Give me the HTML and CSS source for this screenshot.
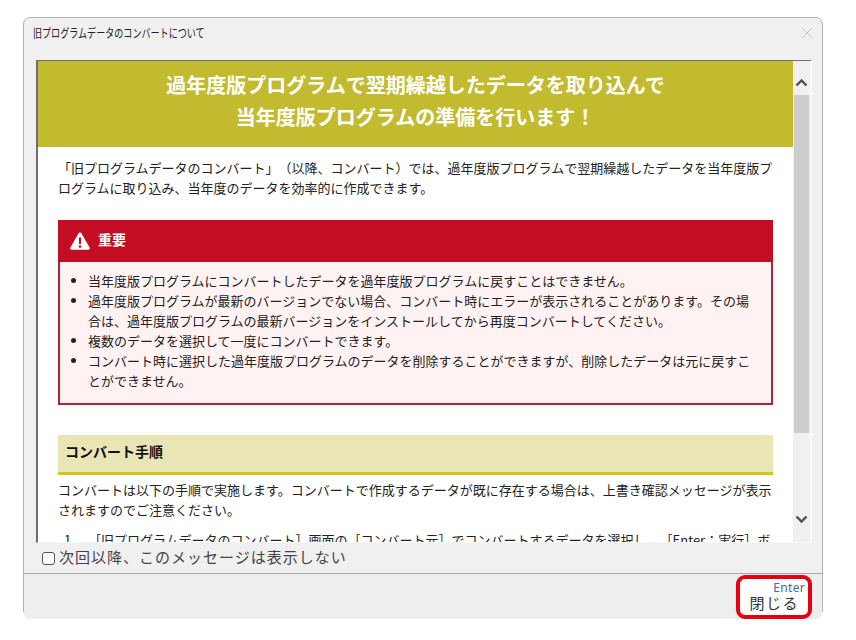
FILE: index.html
```html
<!DOCTYPE html>
<html lang="ja">
<head>
<meta charset="utf-8">
<title>旧プログラムデータのコンバートについて</title>
<link rel="stylesheet" href="styles.css">
</head>
<body>
<div class="window">
  <div class="titlebar">
    <span class="title">旧プログラムデータのコンバートについて</span>
    <svg class="close" width="12" height="12" viewBox="0 0 12 12"><path d="M1 1l10 10M11 1L1 11" stroke="#c8c8c8" stroke-width="1" fill="none"/></svg>
  </div>
  <div class="frame">
    <div class="scroll">
      <div class="banner">過年度版プログラムで翌期繰越したデータを取り込んで<br>当年度版プログラムの準備を行います！</div>
      <div class="content">
        <p class="lead">「旧プログラムデータのコンバート」（以降、コンバート）では、過年度版プログラムで翌期繰越したデータを当年度版プログラムに取り込み、当年度のデータを効率的に作成できます。</p>
        <div class="alert">
          <div class="alert-head">
            <svg width="20" height="18" viewBox="0 0 20 18"><path d="M10 .5c.6 0 1.1.3 1.4.8l8.2 14.2c.6 1-.1 2.2-1.3 2.2H1.700C.5 17.700-.2 16.500.4 15.500L8.600 1.300C8.900.8 9.400.5 10 .5z" fill="#fff"/><path d="M8.800 5.500h2.400l-.3 6.700H9.100zM8.800 13.400h2.400v2.300H8.800z" fill="#c30d23"/></svg>
            <span class="alert-title">重要</span>
          </div>
          <ul class="alert-list">
            <li>当年度版プログラムにコンバートしたデータを過年度版プログラムに戻すことはできません。</li>
            <li>過年度版プログラムが最新のバージョンでない場合、コンバート時にエラーが表示されることがあります。その場合は、過年度版プログラムの最新バージョンをインストールしてから再度コンバートしてください。</li>
            <li>複数のデータを選択して一度にコンバートできます。</li>
            <li>コンバート時に選択した過年度版プログラムのデータを削除することができますが、削除したデータは元に戻すことができません。</li>
          </ul>
        </div>
        <h2 class="section">コンバート手順</h2>
        <p class="para">コンバートは以下の手順で実施します。コンバートで作成するデータが既に存在する場合は、上書き確認メッセージが表示されますのでご注意ください。</p>
        <ol class="steps">
          <li class="step"><span class="num">1.</span><span>［旧プログラムデータのコンバート］画面の［コンバート元］でコンバートするデータを選択し、［Enter：実行］ボタンをクリックします。</span></li>
        </ol>
      </div>
    </div>
    <div class="scrollbar">
      <svg class="arrow arrow-up" width="13" height="9" viewBox="0 0 13 9"><path d="M1.500 7.500l5-5 5 5" stroke="#4f4f4f" stroke-width="2.400" fill="none"/></svg>
      <div class="track"><div class="thumb"></div></div>
      <svg class="arrow arrow-down" width="13" height="9" viewBox="0 0 13 9"><path d="M1.500 1.500l5 5 5-5" stroke="#4f4f4f" stroke-width="2.400" fill="none"/></svg>
    </div>
  </div>
  <label class="check-row"><input type="checkbox" class="check"><span class="check-text">次回以降、このメッセージは表示しない</span></label>
  <div class="footer">
    <button class="close-btn" type="button"><span class="key">Enter</span><span class="label">閉じる</span></button>
  </div>
</div>
</body>
</html>
```

FILE: styles.css
```css
html, body { margin: 0; padding: 0; background: #fff; }
body {
  width: 856px; height: 640px; overflow: hidden; box-sizing: border-box;
  padding: 17px 0 0 23px;
  font-family: "Noto Sans CJK JP", "Noto Sans", sans-serif;
  color: #222;
  text-spacing-trim: space-all;
}
.window {
  box-sizing: border-box; width: 800px; height: 600px;
  background: #f0f0f0; border: 1px solid #b4b4b4; border-radius: 7px;
  display: flex; flex-direction: column;
}
.titlebar {
  height: 42px; flex: none; display: flex; align-items: flex-start; justify-content: space-between;
  padding: 7px 9px 0 9px; box-sizing: border-box;
}
.title {
  display: block; font-size: 12px; line-height: 16px; white-space: nowrap;
  transform: scaleX(.755); transform-origin: left center; color: #222;
}
.close { margin-top: 2px; }
.frame {
  box-sizing: border-box; height: 483px; margin: 0 10px 0 12px; flex: none;
  border-style: solid; border-width: 1px 2px 1px 2px;
  border-color: #6e6e6e #f8f8f8 #f8f8f8 #6e6e6e;
  display: flex; background: #fff;
}
.scroll { width: 755px; height: 100%; overflow: hidden; background: #fff; flex: none; }
.banner {
  background: #c3bb2f; color: #fff; font-weight: 700; font-size: 20px; line-height: 32px;
  text-align: center; height: 86px; box-sizing: border-box; padding-top: 8px;
}
.content { padding: 0 20px; }
.lead { margin: 0; padding: 11px 0 0 0; font-size: 13px; line-height: 20px; }
.alert { margin-top: 22px; border: 2px solid #b81f33; background: #fff2f2; }
.alert-head {
  background: #c30d23; color: #fff; height: 42px; margin: -2px -2px 0; padding-left: 12px;
  display: flex; align-items: center; gap: 8px; font-size: 14px; font-weight: 700;
}
.alert-title { margin-bottom: 4px; }
.alert-list { margin: 0; padding: 9px 14px 12px 28px; font-size: 13px; line-height: 20px; }
.section {
  margin: 30px 0 0; height: 37px; background: #e9e5b5; border-bottom: 3px solid #d4c61e;
  font-size: 14px; line-height: 33px; font-weight: 700; color: #111; padding-left: 7px; border-radius: 1px 1px 0 0;
}
.para { margin: 5px 0 0; font-size: 13px; line-height: 20px; }
.steps { margin: 10px 0 0; padding: 0 0 0 6px; font-size: 13px; line-height: 20px; list-style: none; }
.step { display: flex; }
.num { flex: none; width: 24px; }
.scrollbar {
  width: 17px; flex: 1; background: #f0f0f0; display: flex; flex-direction: column; align-items: center;
}
.arrow { flex: none; }
.arrow-up { margin: 17px 0 8px; }
.arrow-down { margin: 0 0 18px; }
.track { flex: 1; width: 100%; }
.thumb { margin: 0 1px; height: 338px; background: #cdcdcd; }
.check-row {
  height: 30px; flex: none; box-sizing: border-box; padding-left: 18px; display: flex; align-items: center; gap: 4px;
  font-size: 15px; letter-spacing: 1px; color: #444;
}
.check-text { margin-bottom: 3px; }
.check {
  appearance: none; margin: 0; width: 13px; height: 13px; box-sizing: border-box;
  border: 1px solid #555; border-radius: 3px; background: #fff;
}
.footer {
  flex: 1; border-top: 1px solid #a8a8a8; background: #eee; border-radius: 0 0 6px 6px;
  display: flex; justify-content: flex-end; padding-right: 10px; align-items: flex-start;
}
.close-btn {
  box-sizing: border-box; width: 76px; height: 44px; margin-top: 1px; background: #fff;
  border: 4px solid #e60012; border-radius: 9px; padding: 0 3px 0 0; font-family: inherit;
  display: flex; flex-direction: column; align-items: flex-end;
}
.key { font-size: 12px; line-height: 16px; color: #4a6a92; letter-spacing: .3px; margin-top: 1px; font-family: "Noto Sans", sans-serif; }
.label { font-size: 15px; line-height: 14px; letter-spacing: 1.500px; color: #333; margin-right: 6px; }
```
